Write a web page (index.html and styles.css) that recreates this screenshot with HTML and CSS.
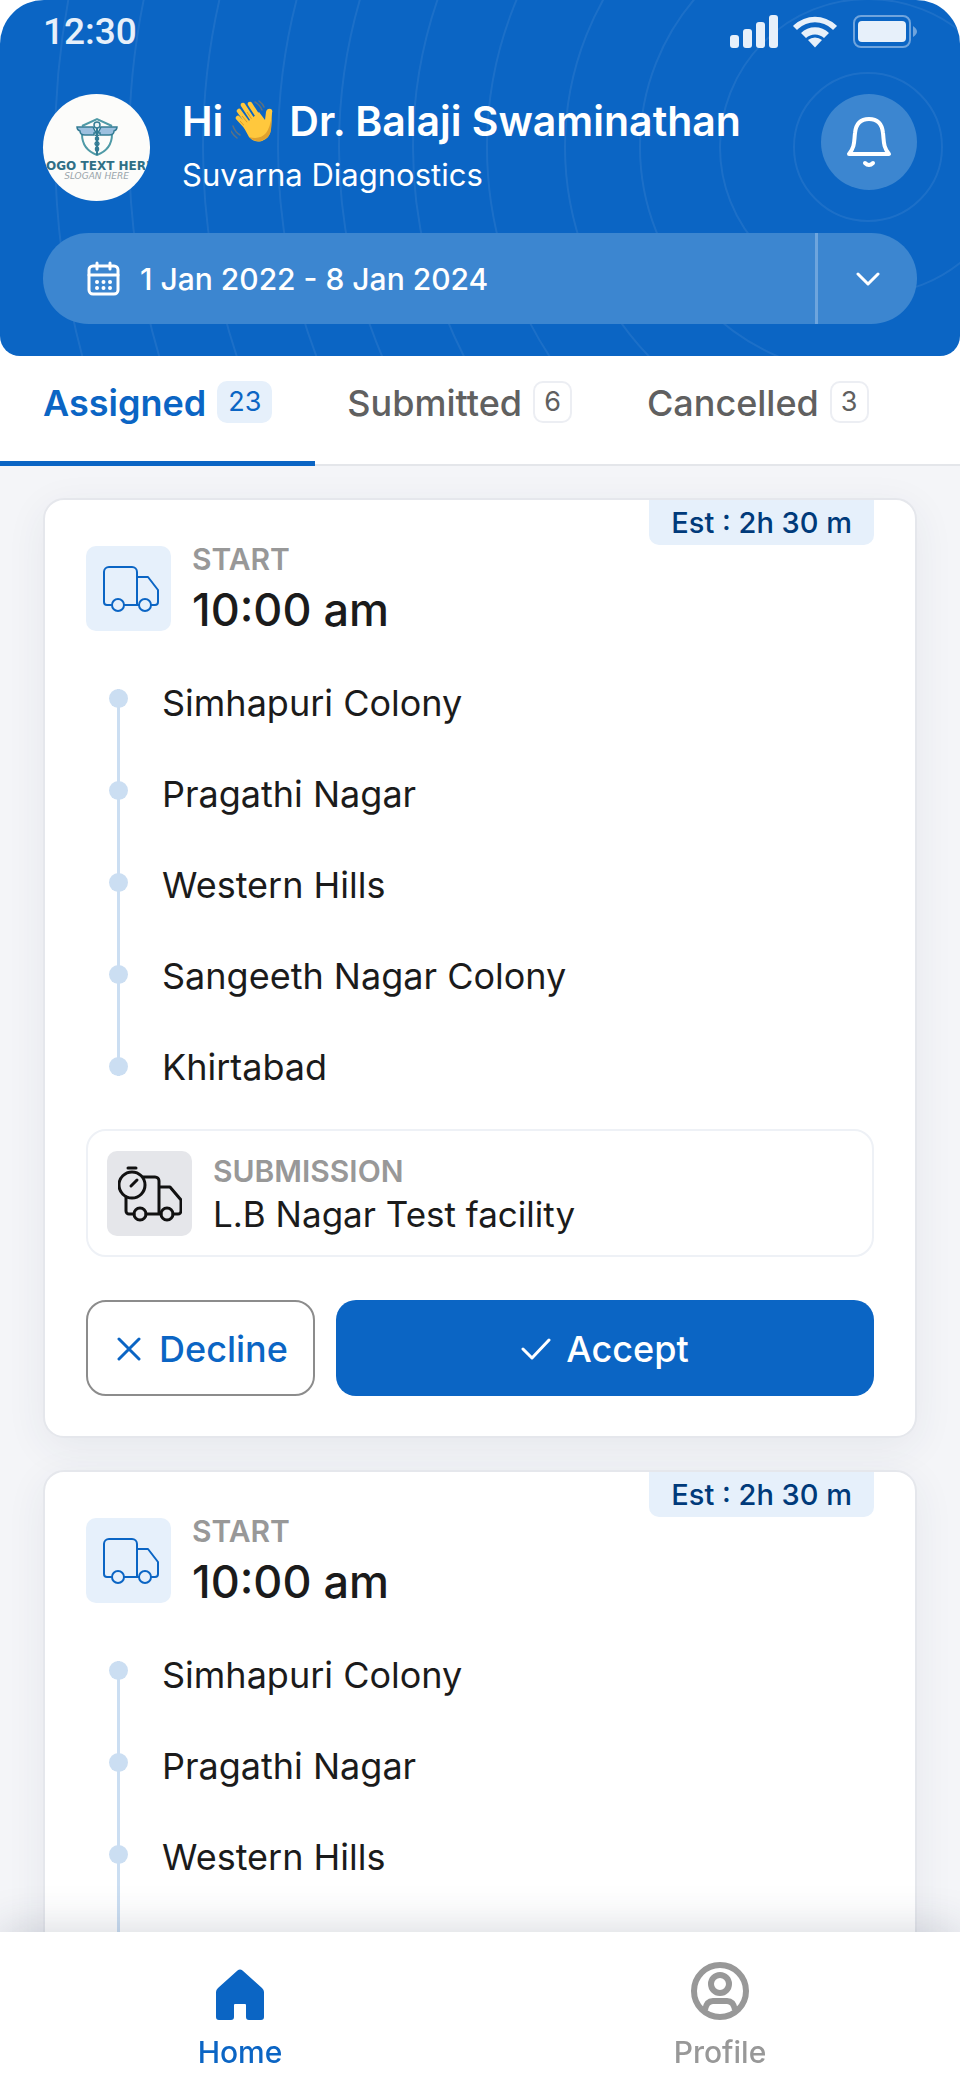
FILE: index.html
```html
<!DOCTYPE html>
<html lang="en">
<head>
<meta charset="utf-8">
<meta name="viewport" content="width=device-width, initial-scale=1">
<title>Assigned pickups</title>
<link rel="stylesheet" href="styles.css">
</head>
<body>
<svg class="defs" aria-hidden="true">
  <symbol id="truck" viewBox="0 0 58 48">
    <path d="M9 40H5a3 3 0 0 1-3-3V7a5 5 0 0 1 5-5h23a5 5 0 0 1 5 5v33M22 40h14M35 12h11l10 13v12a3 3 0 0 1-3 3h-4M35 40h2"/>
    <circle cx="16" cy="40" r="6"/><circle cx="43" cy="40" r="6"/>
  </symbol>
  <symbol id="truck-timer" viewBox="0 0 64 56">
    <path d="M25 11h12a4 4 0 0 1 4 4v33M16 48h-5a3 3 0 0 1-3-3V31M28 48h15M41 21h11l11 13v11a3 3 0 0 1-3 3h-5"/>
    <circle cx="22" cy="48" r="6"/><circle cx="49" cy="48" r="6"/>
    <circle cx="14" cy="19" r="13"/><path d="M10 2h8M13 20l6-6"/>
  </symbol>
</svg>
<div class="app">
  <header class="header">
    <svg class="rings" aria-hidden="true">
      <g transform="translate(-92 147)">
        <circle r="74"/><circle r="148"/><circle r="228"/><circle r="303"/><circle r="381"/><circle r="455"/><circle r="529"/><circle r="590"/><circle r="665"/><circle r="739"/><circle r="813"/>
      </g>
    </svg>
    <div class="status">
      <span class="clock">12:30</span>
      <svg class="status-icons" viewBox="0 0 187 33" aria-hidden="true">
        <g fill="#e7f0fa">
          <rect x="0" y="20" width="9" height="13" rx="3"/><rect x="13" y="14" width="9" height="19" rx="3"/><rect x="26" y="7" width="9" height="26" rx="3"/><rect x="39" y="0" width="9" height="33" rx="3"/>
          <path d="M64 10a31 31 0 0 1 42 0l1 1-4 4-1-1a25 25 0 0 0-34 0l-1 1-4-4z"/>
          <path d="M71 18a20 20 0 0 1 28 0l-5 5a13 13 0 0 0-18 0z"/>
          <path d="M78 25a11 11 0 0 1 14 0l-7 7.500z"/>
          <rect x="128" y="6" width="48" height="21" rx="4"/>
        </g>
        <rect x="124" y="1" width="56" height="31" rx="7" fill="none" stroke="#6fa4dd" stroke-width="2"/>
        <path d="M183 11q8 5.500 0 11z" fill="#6fa4dd"/>
      </svg>
    </div>
    <div class="profile">
      <div class="avatar">
        <svg class="crest" viewBox="0 0 42 40" aria-hidden="true">
          <path d="M6 9 21 2l15 7M6 17c0 12 7 18 15 21 8-3 15-9 15-21" fill="none" stroke="#4f9aa6" stroke-width="2"/>
          <path d="M1 10h16l3 6h-2v2H9q-5 0-5-4-3-1-3-4zM41 10H25l-3 6h2v2h9q5 0 5-4 3-1 3-4z" fill="#9cc0df" stroke="#347c94" stroke-width="1.500"/>
          <path d="M21 10v28" stroke="#347c94" stroke-width="2"/>
          <circle cx="21" cy="8" r="3" fill="#e9f4f5" stroke="#347c94" stroke-width="1.500"/>
          <path d="M19 18q6 3 2 6t0 5q3 3 0 6M23 18q-6 3-2 6t0 5q-3 3 0 6" fill="none" stroke="#347c94" stroke-width="1.500"/>
        </svg>
        <span class="logo-name">LOGO TEXT HERE</span>
        <span class="logo-slogan">SLOGAN HERE</span>
      </div>
      <div class="who">
        <h1 class="name"><span>Hi</span>
          <svg class="wave" viewBox="0 0 42 42" role="img" aria-label="Waving hand">
            <g fill="none" stroke-linecap="round" stroke="#ffc83d" stroke-width="4.500">
              <path d="M18 30 7 18M19 26 8 11M23 22 12 5M28 18 19 4"/>
            </g>
            <path d="M9 21l9 10M11 16l10 12M16 12l8 12" fill="none" stroke="#d99a2b" stroke-width="1"/>
            <path d="M12 26 28 12l6 8 1-8q1-4 5-3 2 1 1 4l-1 16q-1 9-9 12-8 2-13-4z" fill="#ffc83d"/>
            <path d="M41 15l-1 15q-1 8-10 11-7 1-12-4 11 3 17-4 4-5 6-18z" fill="#e0a12e"/>
            <path d="M24 2q5 3 7 8M28 1q4 3 5 6M2 26q2 6 7 9M0 31q2 4 6 7" fill="none" stroke="#5c7182" stroke-width="1.500" stroke-linecap="round"/>
          </svg>
          <span>Dr. Balaji Swaminathan</span></h1>
        <p class="org">Suvarna Diagnostics</p>
      </div>
      <button class="bell" type="button" aria-label="Notifications">
        <svg viewBox="0 0 46 52" aria-hidden="true"><path d="M3 38C9 31 8 25 9 17 10 7 15 3 23 3s13 4 14 14c1 8 0 14 6 21zM19 47q4 4 8 0"/></svg>
      </button>
    </div>
    <div class="range">
      <button class="range-main" type="button">
        <svg class="calendar" viewBox="0 0 33 35" aria-hidden="true">
          <rect x="2" y="5" width="29" height="28" rx="4"/><path d="M2 14h29M10 2v6M23 2v6"/>
          <path class="dots" d="M10 21h.01M16.500 21h.01M23 21h.01M10 27h.01M16.500 27h.01M23 27h.01"/>
        </svg>
        <span>1 Jan 2022 - 8 Jan 2024</span>
      </button>
      <button class="range-more" type="button" aria-label="Change date range">
        <svg viewBox="0 0 24 14" aria-hidden="true"><path d="m2 2 10 10L22 2"/></svg>
      </button>
    </div>
  </header>

  <div class="tabs" role="tablist">
    <button class="tab active" type="button" role="tab" aria-selected="true">Assigned <span class="count">23</span></button>
    <button class="tab" type="button" role="tab" aria-selected="false">Submitted <span class="count">6</span></button>
    <button class="tab" type="button" role="tab" aria-selected="false">Cancelled <span class="count">3</span></button>
  </div>

  <main class="list">
    <article class="card">
      <span class="estimate">Est : 2h 30 m</span>
      <div class="start">
        <span class="tile"><svg class="truck" aria-hidden="true"><use href="#truck"/></svg></span>
        <div><p class="label">START</p><p class="time">10:00 am</p></div>
      </div>
      <div class="route">
        <div class="rail"><i></i><i></i><i></i><i></i><i></i></div>
        <ol class="stops"><li>Simhapuri Colony</li><li>Pragathi Nagar</li><li>Western Hills</li><li>Sangeeth Nagar Colony</li><li>Khirtabad</li></ol>
      </div>
      <div class="submission">
        <span class="tile grey"><svg class="truck-timer" aria-hidden="true"><use href="#truck-timer"/></svg></span>
        <div><p class="label">SUBMISSION</p><p class="place">L.B Nagar Test facility</p></div>
      </div>
      <div class="actions">
        <button class="decline" type="button"><svg viewBox="0 0 24 24" aria-hidden="true"><path d="m2 2 20 20M22 2 2 22"/></svg>Decline</button>
        <button class="accept" type="button"><svg viewBox="0 0 30 24" aria-hidden="true"><path d="m2 12 9 9L28 3"/></svg>Accept</button>
      </div>
    </article>
    <article class="card">
      <span class="estimate">Est : 2h 30 m</span>
      <div class="start">
        <span class="tile"><svg class="truck" aria-hidden="true"><use href="#truck"/></svg></span>
        <div><p class="label">START</p><p class="time">10:00 am</p></div>
      </div>
      <div class="route">
        <div class="rail"><i></i><i></i><i></i><i></i><i></i></div>
        <ol class="stops"><li>Simhapuri Colony</li><li>Pragathi Nagar</li><li>Western Hills</li></ol>
      </div>
    </article>
  </main>

  <nav class="bottom-nav" aria-label="Main">
    <a class="nav-item current" href="#home" aria-current="page">
      <svg viewBox="0 0 64 64" aria-hidden="true"><path d="M29.500 11.500q2.500-2 5 0L54 29q2 2 2 4v25q0 3-3 3H41q-3 0-3-3V46q0-1-1-1H27q-1 0-1 1v12q0 3-3 3H11q-3 0-3-3V33q0-2 2-4z" fill="currentColor"/></svg>
      <span>Home</span>
    </a>
    <a class="nav-item" href="#profile">
      <svg viewBox="0 0 64 64" aria-hidden="true" fill="none" stroke="currentColor" stroke-width="6"><circle cx="32" cy="32" r="26"/><circle cx="32" cy="25" r="9"/><path d="M17 51c1-6 4-9 8-9h14c4 0 7 3 8 9"/></svg>
      <span>Profile</span>
    </a>
  </nav>
</div>
</body>
</html>
```

FILE: styles.css
```css
* { box-sizing: border-box; }
body { margin: 0; background: #fff; font-family: Inter, "Liberation Sans", sans-serif; color: #1b1b1b; }
h1, p, ol { margin: 0; padding: 0; }
ol { list-style: none; }
button { border: 0; padding: 0; background: none; font: inherit; color: inherit; cursor: pointer; }
svg { display: block; flex: none; }
.defs { position: absolute; width: 0; height: 0; }

.app { display: flex; flex-direction: column; height: 100vh; overflow: hidden; border-radius: 44px; background: #fff; }

.header { position: relative; flex: none; padding: 0 43px 32px; border-radius: 0 0 20px 20px; background: #0b65c4; color: #fff; overflow: hidden; }
.header > div { position: relative; }
.rings { position: absolute; top: 0; left: 100%; width: 1px; height: 100%; overflow: visible; fill: none; stroke: #fff; stroke-opacity: 0.07; stroke-width: 2; }
.status { display: flex; align-items: center; justify-content: space-between; height: 62px; }
.clock { font-family: Roboto, sans-serif; font-size: 37px; font-weight: 500; color: #e7f0fa; }
.status-icons { width: 187px; height: 33px; }

.profile { display: flex; align-items: flex-start; margin-top: 32px; }
.avatar { display: flex; flex: none; flex-direction: column; align-items: center; width: 107px; height: 107px; padding-top: 23px; border-radius: 50%; background: #fcfcfa; overflow: hidden; white-space: nowrap; }
.crest { width: 42px; height: 40px; }
.logo-name { margin-top: 3px; font: bold 12px/12px "DejaVu Sans", sans-serif; color: #2f6f86; }
.logo-slogan { font: italic 9px/9px "DejaVu Sans", sans-serif; color: #9aa5ab; }
.who { flex: 1; min-width: 0; padding-left: 32px; }
.name { display: flex; align-items: center; font-size: 41px; line-height: 54px; font-weight: 600; white-space: nowrap; }
.wave { width: 42px; height: 42px; margin: 0 16px 0 8px; }
.org { font-size: 31px; line-height: 53px; }
.bell { display: grid; place-items: center; flex: none; width: 96px; height: 96px; border-radius: 50%; background: #3c86d0; }
.bell svg { width: 46px; height: 52px; fill: none; stroke: #fff; stroke-width: 4; stroke-linecap: round; stroke-linejoin: round; }

.range { display: flex; margin-top: 32px; height: 91px; border-radius: 46px; background: #3c86d0; }
.range-main { display: flex; flex: 1; align-items: center; gap: 20px; padding-left: 44px; font-size: 30px; font-weight: 500; white-space: nowrap; }
.calendar { width: 33px; height: 35px; fill: none; stroke: #fff; stroke-width: 3; stroke-linecap: round; }
.calendar .dots { stroke-width: 4; }
.range-more { display: grid; place-items: center; width: 102px; border-left: 3px solid #6ea5dd; }
.range-more svg { width: 24px; height: 14px; fill: none; stroke: #fff; stroke-width: 3; stroke-linecap: round; stroke-linejoin: round; }

.tabs { display: flex; flex: none; height: 110px; border-bottom: 2px solid #e4e6ea; }
.tab { display: flex; align-items: flex-start; gap: 11px; height: 110px; padding: 25px 43px 0 32px; border-bottom: 5px solid transparent; font-size: 36px; line-height: 45px; font-weight: 500; color: #606060; white-space: nowrap; }
.tab.active { padding-left: 43px; border-color: #0b65c4; font-weight: 600; color: #0b65c4; }
.count { height: 42px; padding: 0 9px; border: 2px solid #eceef3; border-radius: 10px; font-size: 27px; line-height: 38px; font-weight: 400; }
.active .count { border-color: #e6f0fb; background: #e6f0fb; }

.list { flex: 1; min-height: 0; padding: 32px 43px; overflow-y: auto; scrollbar-width: none; background: #f4f5f8; }
.card { position: relative; margin-bottom: 32px; padding: 46px 41px 40px; border: 2px solid #e5e7ec; border-radius: 21px; background: #fff; box-shadow: 0 10px 40px rgba(40, 50, 80, 0.07); }
.estimate { position: absolute; top: 0; right: 41px; padding: 0 22px; border-radius: 0 0 10px 10px; background: #e6f0fb; color: #003a7a; font-size: 29px; line-height: 45px; font-weight: 500; }
.start { display: flex; gap: 21px; }
.tile { display: grid; place-items: center; flex: none; width: 85px; height: 85px; border-radius: 10px; background: #e6f0fb; color: #0b65c4; }
.tile.grey { background: #e5e6ea; color: #111; }
.tile svg { fill: none; stroke: currentColor; stroke-width: 3; stroke-linecap: round; stroke-linejoin: round; }
.tile svg.truck { width: 58px; height: 48px; margin-left: 4px; stroke-width: 2; }
.truck-timer { width: 64px; height: 56px; }
.label { font-size: 30px; line-height: 26px; font-weight: 600; color: #989898; }
.time { padding-top: 10px; font-size: 45px; line-height: 56px; font-weight: 500; }
.route { display: flex; align-items: flex-start; margin: 20px 0 16px; }
.rail { display: flex; flex-direction: column; gap: 73px; width: 19px; margin: 31px 34px 0 23px; background: linear-gradient(#cbdef2, #cbdef2) center / 3px 100% no-repeat; }
.rail i { width: 19px; height: 19px; border-radius: 50%; background: #cbdef2; }
.stops { font-size: 36px; line-height: 91px; }
.submission { display: flex; gap: 21px; height: 128px; padding: 20px 19px; border: 2px solid #eef1f6; border-radius: 20px; }
.submission .label { padding-top: 7px; }
.place { padding-top: 8px; font-size: 35px; line-height: 45px; }
.actions { display: flex; gap: 21px; margin-top: 43px; }
.actions button { display: flex; align-items: center; justify-content: center; height: 96px; border-radius: 20px; font-size: 36px; font-weight: 500; }
.actions svg { fill: none; stroke: currentColor; stroke-width: 3; stroke-linecap: round; stroke-linejoin: round; }
.actions .decline { gap: 18px; padding: 2px 25px 0 29px; border: 2px solid #8c8c8c; color: #0b65c4; }
.decline svg { width: 24px; height: 24px; }
.actions .accept { flex: 1; gap: 15px; padding-top: 2px; background: #0b65c4; color: #fff; }
.accept svg { width: 30px; height: 24px; }

.bottom-nav { position: relative; display: flex; flex: none; height: 164px; background: #fff; box-shadow: 0 -4px 40px rgba(40, 50, 80, 0.18); }
.nav-item { display: flex; flex: 1; flex-direction: column; align-items: center; padding-top: 27px; color: #989898; font-size: 30px; line-height: 36px; font-weight: 500; text-decoration: none; }
.nav-item svg { width: 64px; height: 64px; margin-bottom: 11px; }
.nav-item.current { color: #0b65c4; }
```
